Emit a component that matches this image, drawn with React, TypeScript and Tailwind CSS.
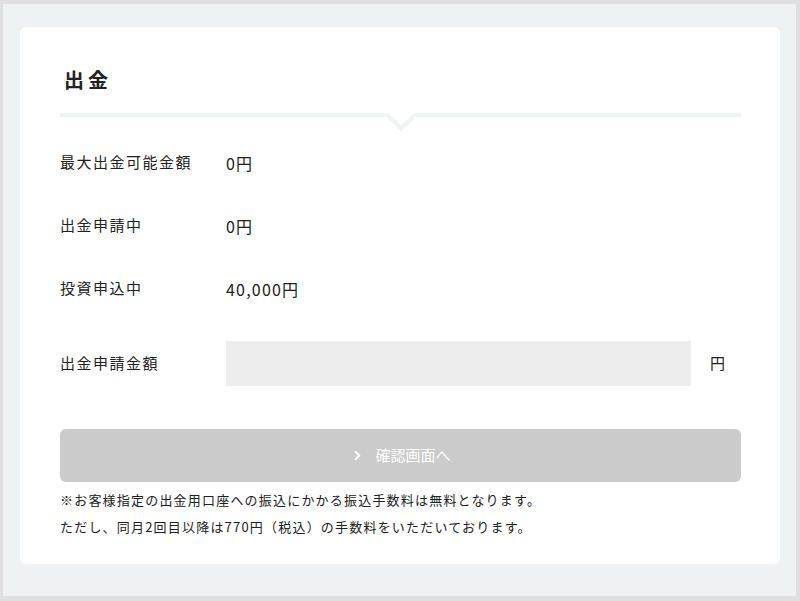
import { ChevronRight } from "lucide-react";

const font = { fontFamily: '"Noto Sans CJK JP", "Noto Sans", sans-serif' };

const rows = [
  { label: "最大出金可能金額", value: "0円" },
  { label: "出金申請中", value: "0円" },
  { label: "投資申込中", value: "40,000円" },
];

function Divider() {
  return (
    <div className="flex items-start">
      <div className="h-[4px] flex-1 bg-[#eff3f4]" />
      <svg width="26" height="18" viewBox="0 0 26 18" className="shrink-0">
        <polyline points="-1,2 13,15.5 27,2" fill="none" stroke="#eff3f4" strokeWidth="4.5" />
      </svg>
      <div className="h-[4px] flex-1 bg-[#eff3f4]" />
    </div>
  );
}

export default function App() {
  return (
    <div
      className="h-[601px] w-[800px] border-t-4 border-l-[3px] border-r-4 border-b-[5px] border-[#dfdee3] bg-[#eff2f4] pl-[17px] pr-[16px] pt-[23px] text-[#222]"
      style={font}
    >
      <div className="flex h-[537px] flex-col rounded-[6px] bg-white pl-[40px] pr-[39px] pt-[39px]">
        <h1 className="pl-[4px] text-[20px] font-semibold leading-[28px] tracking-[4px]">出金</h1>

        <div className="mt-[19px]">
          <Divider />
        </div>

        <div className="flex flex-col">
          {rows.map((r) => (
            <div key={r.label} className="flex h-[63px] items-center">
              <span className="w-[166px] text-[15px] tracking-[1.5px]">{r.label}</span>
              <span className="text-[16px] tracking-[1.2px]">{r.value}</span>
            </div>
          ))}
        </div>

        <div className="mt-[21px] flex items-center">
          <span className="w-[166px] text-[15px] tracking-[1.5px]">出金申請金額</span>
          <div className="h-[45px] w-[465px] bg-[#ededed]" />
          <span className="ml-[19px] text-[15px]">円</span>
        </div>

        <button
          disabled
          className="mt-[43px] flex h-[53px] w-full items-center justify-center gap-[10px] rounded-[6px] bg-[#cbcbcb] text-[15px] text-white"
        >
          <ChevronRight size={15} strokeWidth={3} />
          <span>確認画面へ</span>
        </button>

        <div className="mt-[4px] text-[13px] leading-[27px] tracking-[1.2px]">
          <p>※お客様指定の出金用口座への振込にかかる振込手数料は無料となります。</p>
          <p>ただし、同月2回目以降は770円（税込）の手数料をいただいております。</p>
        </div>
      </div>
    </div>
  );
}
